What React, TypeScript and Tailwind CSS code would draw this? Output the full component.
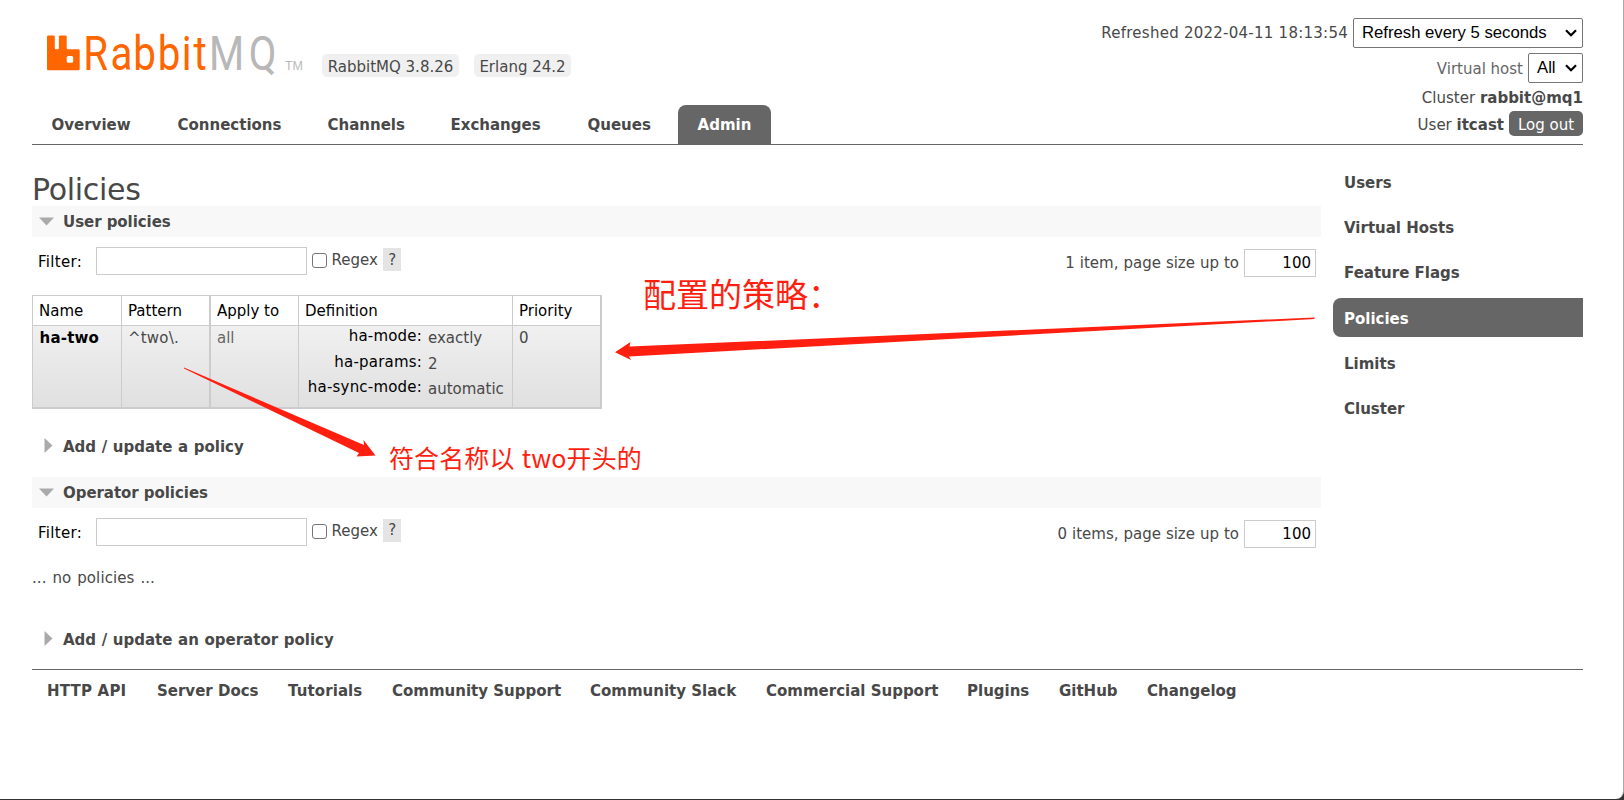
import { clsx } from "clsx";

const tabs = [
  { label: "Overview", className: "w-[126px]" },
  { label: "Connections", className: "w-[150px]" },
  { label: "Channels", className: "w-[123px]" },
  { label: "Exchanges", className: "w-[137px]" },
  { label: "Queues", className: "w-[90.500px]" },
];

const sideLinks = ["Users", "Virtual Hosts", "Feature Flags", "Policies", "Limits", "Cluster"];

const footerLinks = [
  { label: "HTTP API", className: "w-[110px] tracking-[0.2px]" },
  { label: "Server Docs", className: "w-[131px]" },
  { label: "Tutorials", className: "w-[104px] tracking-[0.1px]" },
  { label: "Community Support", className: "w-[198px]" },
  { label: "Community Slack", className: "w-[176px]" },
  { label: "Commercial Support", className: "w-[201px]" },
  { label: "Plugins", className: "w-[92px]" },
  { label: "GitHub", className: "w-[88px]" },
  { label: "Changelog", className: "w-[90px]" },
];

const definition = [
  { key: "ha-mode:", value: "exactly" },
  { key: "ha-params:", value: "2" },
  { key: "ha-sync-mode:", value: "automatic" },
];

function Logo() {
  return (
    <svg className="ml-[14px] h-[70px] w-[262px]" viewBox="46 20 262 70">
      <path
        fill="#ff6600"
        fillRule="evenodd"
        d="M48.300 35.500h5.200q1.300 0 1.300 1.300v11.200q0 1.300 1.300 1.300h1.500q1.300 0 1.300-1.300v-11.200q0-1.300 1.300-1.300h5.200q1.300 0 1.300 1.300v11.200q0 1.300 1.300 1.300h10.400q1.300 0 1.300 1.300v18.400q0 1.300-1.300 1.300H48.300q-1.300 0-1.300-1.300V36.800q0-1.300 1.300-1.300zM68.200 56q-1.500 0-1.500 1.500v3.700q0 1.500 1.500 1.500h3.500q1.500 0 1.500-1.500v-3.700q0-1.500-1.500-1.500z"
      />
      <g transform="scale(.84 1)" fontFamily="Roboto" fontSize="48">
        <text x="99 131.5 158.6 187.7 216.3 230.4" y="70" fill="#ff6600">
          Rabbit
        </text>
        <text x="248.9 296.2" y="70" fill="#b8b8b8">
          MQ
        </text>
      </g>
      <text x="285" y="70" fontSize="12.500" fontFamily="Liberation Sans" fill="#b8b8b8" textLength="18">
        TM
      </text>
    </svg>
  );
}

function Chevron() {
  return (
    <svg className="h-2 w-3" viewBox="0 0 12 8" fill="none" stroke="#000" strokeWidth="2.2">
      <path d="M1 1.200 6 6.200 11 1.200" />
    </svg>
  );
}

function Select({ label, className }: { label: string; className: string }) {
  return (
    <div
      className={clsx(
        "flex h-[30px] items-center justify-between rounded-[2px] border border-[#767676] bg-white pr-[5px] pl-[8px] font-['Liberation_Sans',sans-serif] text-[16.700px] text-black",
        className
      )}
    >
      <span className="pb-px">{label}</span>
      <Chevron />
    </div>
  );
}

function Header() {
  return (
    <header className="flex h-[145px] justify-between border-b border-[#666]">
      <div>
        <div className="flex h-[105px] pt-[20px]">
          <Logo />
          <div className="ml-[14px] flex gap-[15px] pt-[34px]">
            <span className="flex h-[23px] w-[137px] items-center justify-center rounded-[5px] bg-[#f0f0f0] pt-[2px]">RabbitMQ 3.8.26</span>
            <span className="flex h-[23px] w-[97px] items-center justify-center rounded-[5px] bg-[#f0f0f0] pt-[2px]">Erlang 24.2</span>
          </div>
        </div>
        <nav className="flex h-[39px] items-center pl-[19.500px] font-bold">
          {tabs.map((tab) => (
            <a key={tab.label} className={tab.className}>
              {tab.label}
            </a>
          ))}
          <a className="flex h-[39px] w-[93px] items-center justify-center rounded-t-[8px] bg-[#666] text-white">Admin</a>
        </nav>
      </div>

      <div className="flex flex-col items-end pt-[18px]">
        <div className="flex items-center gap-[5px]">
          <span className="tracking-[0.25px]">Refreshed 2022-04-11 18:13:54</span>
          <Select label="Refresh every 5 seconds" className="w-[230px]" />
        </div>
        <div className="mt-[5px] flex items-center gap-[5px]">
          <span className="pt-[2px] text-[#666]">Virtual host</span>
          <Select label="All" className="w-[55px]" />
        </div>
        <div className="mt-[2px] h-[26px] leading-[26px]">
          Cluster <b>rabbit@mq1</b>
        </div>
        <div className="flex h-[25px] items-center gap-[5px]">
          <span className="pt-[2px]">
            User <b>itcast</b>
          </span>
          <span className="flex h-[25px] w-[74px] items-center justify-center rounded-[5px] bg-[#666] pt-[2px] text-white">Log out</span>
        </div>
      </div>
    </header>
  );
}

function SectionTitle({ label, open = false }: { label: string; open?: boolean }) {
  return (
    <h2 className={clsx("flex items-center font-bold", open ? "h-[31px] bg-[#f8f8f8] tracking-[-0.05px]" : "h-[30px] [word-spacing:0.4px]")}>
      <span className="flex w-[31px] pl-[7px]">
        {open ? (
          <svg className="h-[9px] w-[15px]" viewBox="0 0 15 9" fill="#aaa">
            <path d="M0 .5h15L7.500 8.500z" />
          </svg>
        ) : (
          <svg className="mb-[3px] ml-[5px] h-[15px] w-[9px]" viewBox="0 0 9 15" fill="#aaa">
            <path d="M.5 0v15l8-7.500z" />
          </svg>
        )}
      </span>
      {label}
    </h2>
  );
}

function FilterRow({ count, className }: { count: string; className: string }) {
  return (
    <div className={clsx("flex justify-between pr-[5px]", className)}>
      <div className="flex">
        <span className="w-[64px] pt-[5px] pl-[6px] tracking-[0.3px] text-black">Filter:</span>
        <input className="h-[28px] w-[211px] border border-[#ccc] bg-white" type="text" />
        <span className="mt-[6px] ml-[5px] size-[15px] rounded-[3px] border border-[#767676] bg-white" />
        <span className="ml-[4.500px] pt-[3px]">Regex</span>
        <span className="mt-px ml-[5.500px] flex h-[23px] w-[18px] items-center justify-center bg-[#e4e4e4]">?</span>
      </div>
      <div className="flex gap-[5px] pt-[2px]">
        <span className="pt-[4px] [word-spacing:0.2px]">{count}, page size up to</span>
        <span className="h-[28px] w-[72px] border border-[#ccc] bg-white pt-[3px] pr-[4px] text-right text-black">100</span>
      </div>
    </div>
  );
}

function PolicyTable() {
  return (
    <div className="mt-[18px] grid h-[114px] w-[570px] grid-cols-[89px_89px_88px_214px_87px] grid-rows-[30px_81px] border-t border-l border-r-2 border-b-2 border-[#ccc]">
      {["Name", "Pattern", "Apply to", "Definition", "Priority"].map((name) => (
        <div
          key={name}
          className="border-b border-[#ccc] pt-[5px] pl-[6px] text-black not-last:border-r nth-[2]:border-r-2 nth-[5]:border-r-0"
        >
          {name}
        </div>
      ))}
      <div className="border-r border-[#ccc] bg-linear-to-b from-[#f0f0f0] to-[#e0e0e0] pt-[2px] pl-[6.500px] font-bold tracking-[0.2px] text-black">ha-two</div>
      <div className="border-r-2 border-[#ccc] bg-linear-to-b from-[#f0f0f0] to-[#e0e0e0] pt-[2px] pl-[6px] tracking-[0.2px]">^two\.</div>
      <div className="border-r border-[#ccc] bg-linear-to-b from-[#f0f0f0] to-[#e0e0e0] pt-[2px] pl-[6px] text-[#666]">all</div>
      <div className="border-r border-[#ccc] bg-linear-to-b from-[#f0f0f0] to-[#e0e0e0]">
        {definition.map((item) => (
          <div key={item.key} className="flex h-[25.500px]">
            <span className="w-[123px] text-right tracking-[0.2px] text-black">{item.key}</span>
            <span className="ml-[6px] pt-[2px]">{item.value}</span>
          </div>
        ))}
      </div>
      <div className="bg-linear-to-b from-[#f0f0f0] to-[#e0e0e0] pt-[2px] pl-[6px]">0</div>
    </div>
  );
}

function Sidebar() {
  return (
    <aside className="flex w-[250px] flex-col gap-[6.300px] pt-[17px] font-bold">
      {sideLinks.map((link) => (
        <a
          key={link}
          className={clsx("flex h-[39px] items-center rounded-l-[8px] pt-[2.500px] pl-[11px]", link === "Policies" && "bg-[#666] text-white")}
        >
          {link}
        </a>
      ))}
    </aside>
  );
}

// hand-drawn notes laid over the page
function Annotations() {
  return (
    <>
      <svg className="pointer-events-none absolute inset-0 h-[800px] w-[1624px]" viewBox="0 0 1624 800" fill="#ff1f10">
        <path d="M1314.500 317.500 629.500 346.500 630.500 342 615 352.300 631 360 629 356.500 1314.500 319z" />
        <path d="M184 367.500 364 445 363.500 440 375.500 455.500 356.500 456.500 359 453 184 368.500z" />
      </svg>
      <p className="absolute top-[268px] left-[643px] text-[33px] leading-[50px] whitespace-nowrap text-[#ff1f10] font-['Noto_Sans_CJK_SC',sans-serif]">
        配置的策略：
      </p>
      <p className="absolute top-[438px] left-[389px] text-[25px] leading-[38px] tracking-[0.1px] [word-spacing:1.500px] whitespace-nowrap text-[#ff1f10] font-['Noto_Sans_CJK_SC',sans-serif]">
        符合名称以 two开头的
      </p>
    </>
  );
}

export default function App() {
  return (
    <div className="h-[800px] w-[1624px] overflow-hidden bg-[#333]">
      <div className="relative h-[799px] w-[1624px] overflow-hidden rounded-br-[8px] border-r border-[#aaa] bg-white pr-[40px] pl-[32px] font-['DejaVu_Sans',sans-serif] text-[15px] leading-[20px] text-[#484848]">
        <Header />
        <div className="flex h-[524px] justify-between">
          <main className="w-[1289px]">
            <h1 className="h-[61px] pt-[25px] text-[30px] leading-[40px] tracking-[-0.300px]">Policies</h1>
            <SectionTitle label="User policies" open />
            <FilterRow count="1 item" className="pt-[10px]" />
            <PolicyTable />
            <div className="pt-[23px] pb-[15px]">
              <SectionTitle label="Add / update a policy" />
            </div>
            <SectionTitle label="Operator policies" open />
            <FilterRow count="0 items" className="pt-[9.500px]" />
            <p className="mt-[20.500px] tracking-[0.1px] [word-spacing:1px]">... no policies ...</p>
            <div className="pt-[37px]">
              <SectionTitle label="Add / update an operator policy" />
            </div>
          </main>
          <Sidebar />
        </div>
        <footer className="flex border-t border-[#666] pt-[11px] pl-[15px] font-bold whitespace-nowrap">
          {footerLinks.map((link) => (
            <a key={link.label} className={link.className}>
              {link.label}
            </a>
          ))}
        </footer>
        <Annotations />
      </div>
    </div>
  );
}
